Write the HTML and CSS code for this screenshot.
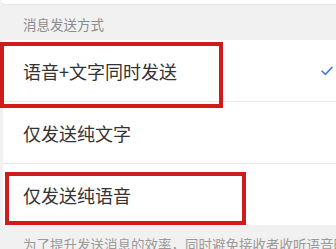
FILE: index.html
```html
<!DOCTYPE html>
<html lang="zh">
<head>
<meta charset="utf-8">
<link rel="stylesheet" href="styles.css">
</head>
<body>
<div class="page">
  <div class="topcard"></div>
  <div class="section-title">消息发送方式</div>
  <div class="list">
    <div class="row">
      <span class="label">语音+文字同时发送</span>
      <svg class="check" viewBox="0 0 12 10" width="12" height="10"><polyline points="1,5.2 4.4,8.4 11,1.4" fill="none" stroke="#4f80cf" stroke-width="1.6" stroke-linecap="round" stroke-linejoin="round"/></svg>
    </div>
    <div class="row">
      <span class="label">仅发送纯文字</span>
    </div>
    <div class="row">
      <span class="label">仅发送纯语音</span>
    </div>
  </div>
  <div class="footer">为了提升发送消息的效率，同时避免接收者收听语音时的不便</div>
  <div class="mark mark-first"></div>
  <div class="mark mark-third"></div>
</div>
</body>
</html>
```
FILE: styles.css
```css
html, body {
  margin: 0;
  padding: 0;
}
body {
  background: #f1f1f1;
  font-family: "Noto Sans CJK SC", "Noto Sans", sans-serif;
}
.page {
  position: relative;
  width: 336px;
  height: 249px;
  overflow: hidden;
  background: #f1f1f1;
}
.topcard {
  height: 4px;
  margin-left: 1px;
  background: #fff;
  border-radius: 0 0 0 6px;
  box-shadow: 0 1px 0 #e4e4e4;
}
.section-title {
  height: 36px;
  box-sizing: border-box;
  padding: 13px 0 0 23px;
  font-size: 13.5px;
  line-height: 14px;
  color: #8c8c8c;
}
.list {
  margin-left: 3px;
  background: #fff;
}
.row {
  height: 61px;
  display: flex;
  align-items: center;
  justify-content: space-between;
  padding: 0 3px 0 20px;
  border-bottom: 1px solid #e8e8e8;
}
.row:last-child {
  border-bottom: none;
}
.label {
  font-size: 18px;
  line-height: 20px;
  color: #333;
}
.check {
  display: block;
}
.footer {
  padding: 12px 0 0 23px;
  font-size: 13.5px;
  line-height: 14px;
  color: #9a9a9a;
  white-space: nowrap;
}
.mark {
  position: absolute;
  border: 4px solid #cf1b1b;
  box-sizing: border-box;
}
.mark-first {
  left: 0;
  top: 42px;
  width: 223px;
  height: 66px;
}
.mark-third {
  left: 5px;
  top: 172px;
  width: 241px;
  height: 53px;
}
```
